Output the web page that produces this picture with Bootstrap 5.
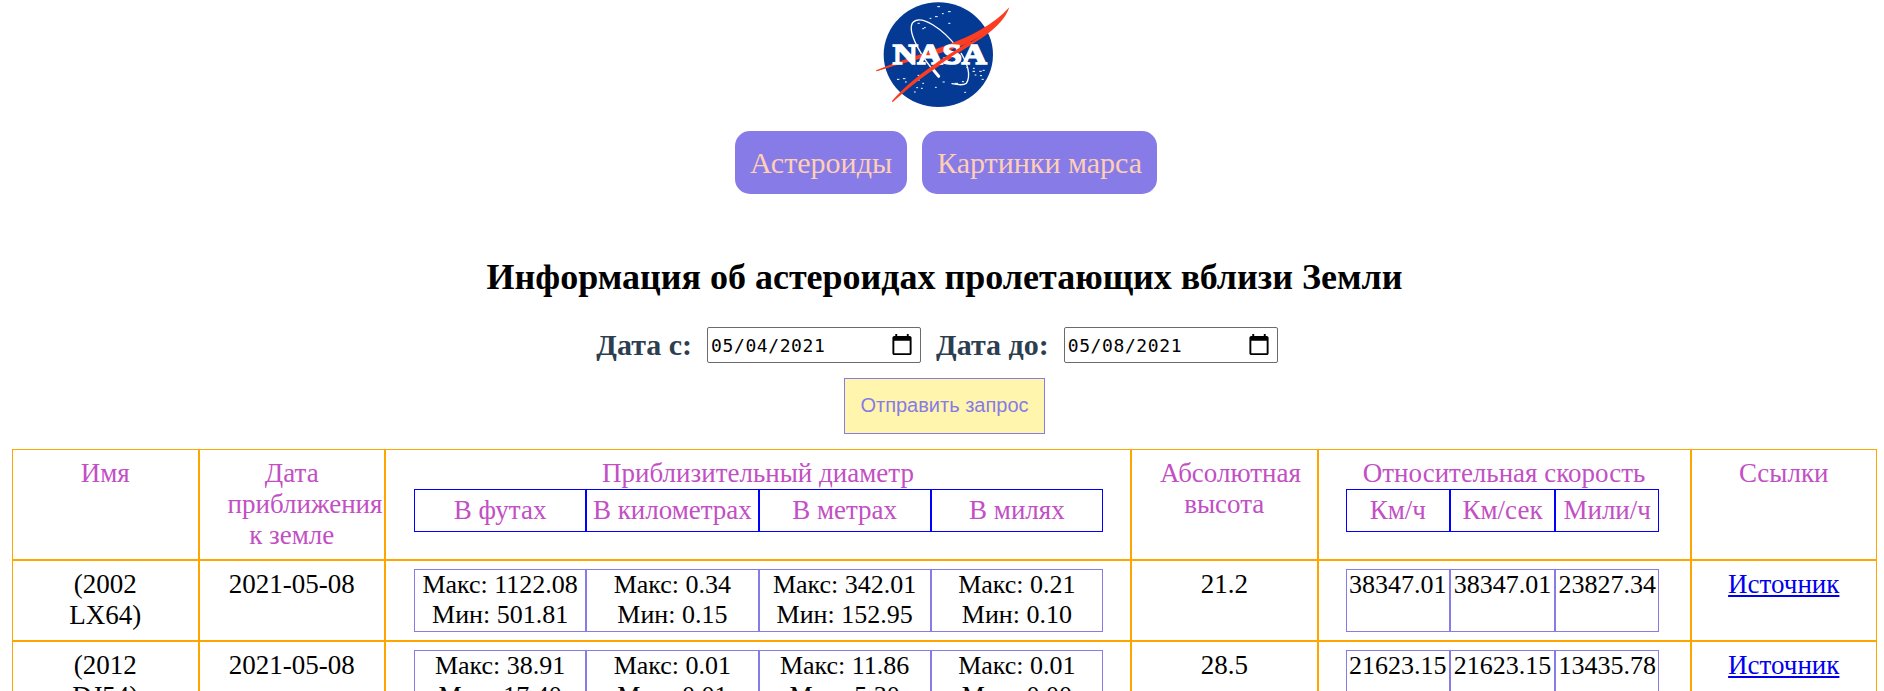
<!DOCTYPE html>
<html lang="en">
<head>
<meta charset="utf-8">
<title>NASA</title>
<link href="https://cdn.jsdelivr.net/npm/bootstrap@5.3.0/dist/css/bootstrap.min.css" rel="stylesheet">
<style>
html{overflow:hidden}
body{font-family:"Liberation Serif",serif;color:#000;font-size:27px;line-height:31px;padding:0 7px 0 12px;height:691px;overflow:hidden;letter-spacing:0}
.logo{width:170px;height:120px;display:block}
.tabs{gap:15px;margin-top:11px;padding-left:3px}
.tab-link{background:#877be8;color:#ffcfb3;border-radius:15px;padding:0 15px;height:63px;line-height:63px;font-size:30px;text-decoration:none}
.title{font-size:36px;line-height:42px;font-weight:700;margin:62px 0 0}
.dates{margin-top:29px;height:36px;gap:15px;padding-right:15px}
.date-label{color:#2c3e50;font-weight:700;font-size:30px;line-height:35px}
.date-input{width:214px;height:36px;border:1px solid #6b6b6b;border-radius:2px;padding:0 6px 0 3px;font:18px "DejaVu Sans Mono",monospace;color:#000;background:#fff}
.date-input::-webkit-datetime-edit{letter-spacing:.6px}
.date-input::-webkit-calendar-picker-indicator{width:24px;height:24px;padding:0;margin:0}
.send{width:201px;height:56px;margin-top:15px;background:#fff5ad;border:1px solid #877be8;color:#877be8;font:20px "Liberation Sans",sans-serif;padding:0 0 2px}
.asteroids{margin-top:15px}
.grid-row{display:grid;grid-template-columns:1fr 1fr 4fr 1fr 2fr 1fr;text-align:center}
.grid-row>div{border:1px solid orange;padding:8px 28px;min-width:0}
.grid-head{height:111px;color:#c24fc4}
.grid-body{height:81px}
.sub{display:grid;grid-template-columns:repeat(4,1fr);font-size:26px;line-height:30px;margin-right:-1px}
.sub.speed{grid-template-columns:repeat(3,1fr);margin-right:2px;margin-left:-1px}
.sub>div{border:1px solid #877be8;height:63px;white-space:nowrap;min-width:0}
.grid-head .sub{font-size:27px}
.grid-head .sub>div{border-color:blue;height:43px;padding:5px 0}
.source{color:#0000ee}
</style>
</head>
<body>
<header class="d-flex flex-column align-items-center">
<svg class="logo" viewBox="0 0 510 360" role="img" aria-label="NASA">
<ellipse cx="235" cy="164" rx="164" ry="157" fill="#043a94"/>
<g fill="none" stroke="#fff" stroke-linecap="round">
<path d="M236 229C185 175 140 95 158 68C182 40 250 88 291 142C326 188 333 228 319 250C311 257 296 255 276 251" stroke-width="4"/>
<path d="M221 211L236 229" stroke-width="9"/>
<path d="M233 20h6M265 35h6M226 50h6M210 55h3M247 41h3M266 70h4M193 83h3M174 70h4M188 86h3M112 238h5M130 236h5M136 246h3M174 226h3M175 240h3M188 250h3M170 263h3M184 265h3M226 262h3M163 276h3M249 246h4M339 214h5M359 214h5M369 211h4M345 225h3M361 227h4M366 238h4M307 245h4M314 277h3M340 205h3M320 203h3M285 250h8" stroke-width="3"/>
</g>
<path d="M50 212C180 153 350 130 448 22C426 86 350 125 218 211C170 242 130 276 97 306C150 243 245 178 370 104C270 165 170 172 50 214Z" fill="#fc3d21"/>
<path d="M48 211C110 187 160 170 220 153L222 161C160 175 110 190 50 214Z" fill="#fc3d21"/>
<path d="M278 172L360 120" stroke="#043a94" stroke-width="4"/>
<text x="98" y="192" textLength="282" lengthAdjust="spacingAndGlyphs" font-family="Liberation Serif, serif" font-weight="700" font-size="86" fill="#fff" stroke="#fff" stroke-width="5">NASA</text>
<path d="M96 303C145 248 215 193 330 124L336 130C220 203 150 260 98 307Z" fill="#fc3d21"/>
</svg>
<nav class="tabs d-flex"><a class="tab-link" href="#">Астероиды</a><a class="tab-link" href="#">Картинки марса</a></nav>
</header>
<main>
<h1 class="title text-center">Информация об астероидах пролетающих вблизи Земли</h1>
<form class="d-flex flex-column align-items-center">
<div class="dates d-flex">
<label class="date-label" for="from">Дата с:</label><input class="date-input" id="from" type="date" value="2021-05-04">
<label class="date-label" for="to">Дата до:</label><input class="date-input" id="to" type="date" value="2021-05-08">
</div>
<button class="send" type="button">Отправить запрос</button>
</form>
<section class="asteroids">
<div class="grid-row grid-head">
<div>Имя</div><div>Дата приближения к земле</div>
<div>Приблизительный диаметр<div class="sub"><div>В футах</div><div>В километрах</div><div>В метрах</div><div>В милях</div></div></div>
<div>Абсолютная высота</div>
<div>Относительная скорость<div class="sub speed"><div>Км/ч</div><div>Км/сек</div><div>Мили/ч</div></div></div>
<div>Ссылки</div>
</div>
<div class="grid-row grid-body">
<div>(2002 LX64)</div><div class="text-nowrap">2021-05-08</div>
<div><div class="sub"><div>Макс: 1122.08<br>Мин: 501.81</div><div>Макс: 0.34<br>Мин: 0.15</div><div>Макс: 342.01<br>Мин: 152.95</div><div>Макс: 0.21<br>Мин: 0.10</div></div></div>
<div>21.2</div>
<div><div class="sub speed"><div>38347.01</div><div>38347.01</div><div>23827.34</div></div></div>
<div><a class="source" href="#">Источник</a></div>
</div>
<div class="grid-row grid-body">
<div>(2012 DJ54)</div><div class="text-nowrap">2021-05-08</div>
<div><div class="sub"><div>Макс: 38.91<br>Мин: 17.40</div><div>Макс: 0.01<br>Мин: 0.01</div><div>Макс: 11.86<br>Мин: 5.30</div><div>Макс: 0.01<br>Мин: 0.00</div></div></div>
<div>28.5</div>
<div><div class="sub speed"><div>21623.15</div><div>21623.15</div><div>13435.78</div></div></div>
<div><a class="source" href="#">Источник</a></div>
</div>
</section>
</main>
<script src="https://cdn.jsdelivr.net/npm/bootstrap@5.3.0/dist/js/bootstrap.bundle.min.js"></script>
</body>
</html>
